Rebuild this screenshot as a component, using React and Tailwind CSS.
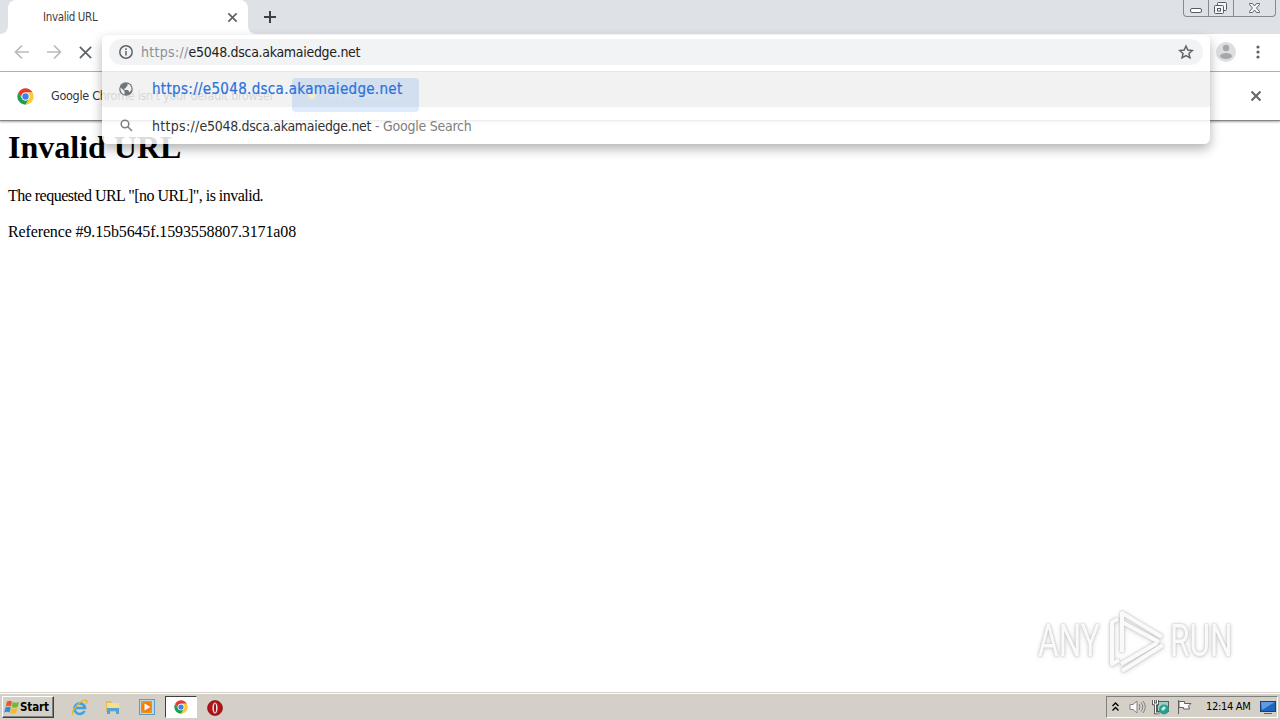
import React from 'react';

function CloseIcon({ className, width = 1.8 }) {
    return (
        <svg className={className} viewBox="0 0 12 12" fill="none" stroke="currentColor" strokeWidth={width}>
            <path d="M1.5 1.5l9 9M10.5 1.5l-9 9" />
        </svg>
    );
}

function ChromeIcon({ className }) {
    return (
        <svg className={className} viewBox="0 0 48 48">
            <circle cx="24" cy="24" r="23" fill="#fff" />
            <path d="M4.1 12.5A23 23 0 0 1 43.9 12.5H24A11.5 11.5 0 0 0 14 29.7z" fill="#e33b2e" />
            <path d="M43.9 12.5A23 23 0 0 1 24 47l10-17.3A11.5 11.5 0 0 0 24 12.5z" fill="#fcc934" />
            <path d="M24 47A23 23 0 0 1 4.1 12.5L14 29.7A11.5 11.5 0 0 0 34 29.7z" fill="#1e9e50" />
            <circle cx="24" cy="24" r="11" fill="#fff" />
            <circle cx="24" cy="24" r="9" fill="#3f7fe8" />
        </svg>
    );
}

function TabStrip() {
    return (
        <div className="flex h-[34px] items-start bg-[#dee1e6]">
            <div className="h-[34px] w-2 bg-white">
                <div className="h-[34px] w-2 rounded-br-lg bg-[#dee1e6]"></div>
            </div>
            <div className="flex h-[34px] w-[240px] items-center rounded-t-lg bg-white pl-[35px] pr-[10px]">
                <span className="flex-1 pt-px text-[11.5px] tracking-[-0.35px] text-[#3c4043]">Invalid URL</span>
                <CloseIcon className="h-[11px] w-[11px] text-[#5f6368]" width={1.9} />
            </div>
            <div className="h-[34px] w-2 bg-white">
                <div className="h-[34px] w-2 rounded-bl-lg bg-[#dee1e6]"></div>
            </div>
            <svg className="ml-[7px] mt-[10px] h-[14px] w-[14px]" viewBox="0 0 14 14" stroke="#3c4043" strokeWidth="2">
                <path d="M7 1v12M1 7h12" />
            </svg>
            <div className="ml-auto mr-1 flex h-[17px] w-[93px] rounded-b-[4px] border border-t-0 border-[#848994] bg-[#dee1e6]">
                <div className="w-[25px] border-r border-[#848994]">
                    <svg className="h-4 w-6" viewBox="0 0 24 16" fill="#fff" stroke="#555b66">
                        <rect x="6.5" y="8.5" width="11" height="4" rx="1.5" />
                    </svg>
                </div>
                <div className="w-[25px] border-r border-[#848994]">
                    <svg className="h-4 w-6" viewBox="0 0 24 16" fill="#f5f6f8" stroke="#555b66">
                        <rect x="8.5" y="2.5" width="9" height="8" rx="1" />
                        <rect x="5.5" y="5.5" width="9" height="8" rx="1" />
                        <rect x="8.5" y="8.5" width="3" height="2.5" />
                    </svg>
                </div>
                <svg className="h-4 w-[41px]" viewBox="0 0 41 16" fill="#f5f6f8" stroke="#555b66" strokeWidth="0.9">
                    <path d="M15.5 3.5h3l2 2.500 2-2.500h3v1L22.5 8l3 3.500v1h-3l-2-2.500-2 2.500h-3v-1l3-3.500-3-3.500z" />
                </svg>
            </div>
        </div>
    );
}

function Toolbar() {
    return (
        <div className="flex h-[38px] items-center border-b border-[#b2b4b6] bg-white pb-px pl-[14px]">
            <svg className="mr-4 h-4 w-4" viewBox="0 0 16 16" fill="none" stroke="#b8babd" strokeWidth="1.700">
                <path d="M15 8H2M8 1.500L1.500 8 8 14.500" />
            </svg>
            <svg className="mr-4 h-4 w-4" viewBox="0 0 16 16" fill="none" stroke="#b8babd" strokeWidth="1.700">
                <path d="M1 8h13M8 1.500L14.500 8 8 14.500" />
            </svg>
            <CloseIcon className="h-[15px] w-[15px] text-[#5f6368]" width={1.4} />
            <svg className="ml-auto mr-5 h-5 w-5" viewBox="0 0 20 20">
                <circle cx="10" cy="10" r="10" fill="#dddedf" />
                <circle cx="10" cy="6" r="3.200" fill="#a5a7aa" />
                <ellipse cx="10" cy="14" rx="6" ry="3" fill="#a5a7aa" />
            </svg>
            <svg className="mr-5 h-4 w-[4px]" viewBox="0 0 4 16" fill="#5f6368">
                <circle cx="2" cy="3" r="1.600" />
                <circle cx="2" cy="8" r="1.600" />
                <circle cx="2" cy="13" r="1.600" />
            </svg>
        </div>
    );
}

function DefaultBrowserBar() {
    return (
        <div className="flex h-[49px] items-center border-b border-[#858585] bg-white pl-[17px] pr-[18px] shadow-[0_1px_2px_rgba(0,0,0,0.35)]">
            <ChromeIcon className="h-[17px] w-[17px]" />
            <span className="ml-[17px] w-[241px] whitespace-nowrap text-[12.5px] tracking-[-0.3px] text-[#333]">
                Google Chrome isn't your default browser
            </span>
            <div className="mt-[-2px] flex h-[34px] w-[127px] items-center gap-2 rounded-[4px] bg-[#1a73e8] pl-4 text-[12px] text-[#5d9bee]">
                <span className="h-2 w-2 rounded-full bg-[#fcc934]"></span>
                Set as default
            </div>
            <CloseIcon className="ml-auto h-[12px] w-[12px] text-[#5f6368]" width={1.9} />
        </div>
    );
}

function Omnibox() {
    return (
        <div className="absolute left-[102px] top-[35px] h-[109px] w-[1108px] rounded-[6px] bg-white/86 shadow-[0_5px_12px_rgba(0,0,0,0.3)]">
            <div className="h-9 px-[7px] pt-[4px]">
                <div className="flex h-[26px] items-center rounded-full bg-[#f1f3f4] pl-[10px] pr-[9px]">
                    <svg className="h-[14px] w-[14px]" viewBox="0 0 14 14" fill="none" stroke="#5f6368" strokeWidth="1.500">
                        <circle cx="7" cy="7" r="6.200" />
                        <path d="M7 6v4.500M7 3.300v1.600" />
                    </svg>
                    <span className="ml-2 text-[14px] tracking-[-0.3px] text-[#222]">
                        <span className="tracking-[0.3px] text-[#8b9095]">https://</span>e5048.dsca.akamaiedge.net
                    </span>
                    <svg className="ml-auto h-4 w-4" viewBox="0 0 24 24" fill="none" stroke="#5f6368" strokeWidth="2.200">
                        <path d="M12 3l2.700 6.100 6.800.6-5.100 4.500 1.500 6.600L12 17.300l-5.900 3.500 1.500-6.600L2.500 9.700l6.800-.6z" />
                    </svg>
                </div>
            </div>
            <div className="flex h-9 items-center bg-black/5 pl-[17px]">
                <svg className="h-[14px] w-[14px]" viewBox="0 0 14 14">
                    <circle cx="7" cy="7" r="6.800" fill="#70757a" />
                    <path d="M1.500 5.500l4 3.500v3.500C3 12 1.300 9.500 1.500 5.500zM8.500 1.700c3 .6 4.300 3.200 4 6l-2 2.500L9 8H5.500V6.300H7V5l1.500-1z" fill="#f1f1f1" />
                </svg>
                <span className="ml-[19px] text-[15px] tracking-[0.31px] text-[#2b72dc] [-webkit-text-stroke:0.2px_#2b72dc]">https://e5048.dsca.akamaiedge.net</span>
            </div>
            <div className="flex h-[37px] items-center pl-[18px] pt-px">
                <svg className="-mt-px h-[13px] w-[13px]" viewBox="0 0 13 13" fill="none" stroke="#7b7f83" strokeWidth="1.500">
                    <circle cx="5" cy="5" r="3.800" />
                    <path d="M7.800 7.800L12 12" />
                </svg>
                <span className="ml-[19px] text-[14px] tracking-[-0.3px] text-[#333]">
                    <span className="tracking-[0.3px]">https://</span>e5048.dsca.akamaiedge.net<span className="tracking-[-0.25px] text-[#808080]"> - Google Search</span>
                </span>
            </div>
        </div>
    );
}

function Watermark() {
    return (
        <div className="absolute left-[1038px] top-[609px] flex h-[64px] w-[196px] items-center justify-between font-['Roboto',sans-serif] text-[44px] text-[#fafafa] [filter:drop-shadow(0_0_1px_#bbb)_drop-shadow(0_1px_2px_#ddd)]">
            <span className="w-[66px] origin-left scale-x-[0.72]">ANY</span>
            <svg className="h-[62px] w-[58px] shrink-0" viewBox="0 0 58 62" fill="none" stroke="#fafafa" strokeWidth="4" strokeLinejoin="round">
                <path d="M14 42V3l40 24M14 12l37 20M13 54l36-21M14 61l41-26M10 9L4 12v42l7-4" />
            </svg>
            <span className="w-[64px] origin-left scale-x-[0.72]">RUN</span>
        </div>
    );
}

function WindowsFlag() {
    return (
        <svg className="h-4 w-4" viewBox="0 0 16 16">
            <path d="M3 2.500Q6 1 8 2.500L7 7.500Q4.500 6 1.800 7.500z" fill="#e85a20" />
            <path d="M8.800 3Q11.500 4.500 15 3l-1.300 5Q10.500 9.300 7.800 8z" fill="#74b53a" />
            <path d="M1.500 8.500Q4.500 7 6.800 8.500L5.600 13.500Q3 12 .2 13.500z" fill="#3689d6" />
            <path d="M7.500 9Q10.500 10.500 13.500 9l-1.300 5Q9 15.500 6.300 14z" fill="#f5bd20" />
        </svg>
    );
}

function Taskbar() {
    return (
        <div className="flex h-7 items-start border-t border-[#d4d0c8] bg-[#d4d0c8] pt-[3px] shadow-[inset_0_1px_0_#fff] font-['DejaVu_Sans_Condensed','DejaVu_Sans',sans-serif]">
            <div className="ml-[2px] flex h-[22px] w-[52px] items-center border border-b-[#404040] border-l-white border-r-[#404040] border-t-white pl-[1px] shadow-[inset_-1px_-1px_0_#808080]">
                <WindowsFlag />
                <span className="pt-px text-[11.5px] font-bold tracking-[-0.1px] text-black">Start</span>
            </div>
            <svg className="ml-[17px] mt-[3px] h-[17px] w-[17px]" viewBox="0 0 17 17" fill="none">
                <path d="M13.500 12A5.300 5.300 0 1 1 14 9H5" stroke="#3fa3dc" strokeWidth="2.600" />
                <path d="M2 15.500C-1.500 13 11-1 15.500 1.500c1 .8.300 2-.5 3" stroke="#e8b42c" strokeWidth="1.300" />
            </svg>
            <svg className="ml-[17px] mt-[3px] h-4 w-4" viewBox="0 0 16 16">
                <path d="M1 2h5l1 2h7v9H1z" fill="#e3bd55" />
                <path d="M2 4h12v5H2z" fill="#f7e08d" />
                <path d="M2 9h12v6h-3v-3H5v3H2z" fill="#55a3d3" />
            </svg>
            <svg className="ml-[18px] mt-[3px] h-4 w-4" viewBox="0 0 16 16">
                <rect x="0.500" y="0.500" width="15" height="15" fill="#b9d9ed" stroke="#5a9bc7" />
                <rect x="2" y="2" width="11" height="12" fill="#f29018" />
                <circle cx="7.500" cy="8" r="5" fill="#f67a07" />
                <path d="M5.500 4.500v7L11.500 8z" fill="#fff" />
            </svg>
            <div className="ml-[10px] flex h-[22px] w-8 items-center justify-center border border-b-white border-l-[#404040] border-r-white border-t-[#404040] bg-white">
                <ChromeIcon className="h-[14px] w-[14px]" />
            </div>
            <svg className="ml-[10px] mt-[4px] h-4 w-4" viewBox="0 0 16 16">
                <circle cx="8" cy="8" r="7.500" fill="#b51218" stroke="#6e0a0d" strokeWidth="0.600" />
                <ellipse cx="8" cy="8" rx="2.600" ry="5.500" fill="#f2dede" />
                <ellipse cx="8" cy="8" rx="1" ry="4.500" fill="#8d1014" />
            </svg>
            <div className="ml-auto mr-[2px] flex h-[22px] w-[172px] items-center border border-b-white border-l-[#808080] border-r-white border-t-[#808080] pl-[5px]">
                <svg className="h-[10px] w-[7px]" viewBox="0 0 7 10" fill="none" stroke="#000" strokeWidth="1.400">
                    <path d="M.5 4l3-3 3 3M.5 8.500l3-3 3 3" />
                </svg>
                <svg className="ml-[10px] h-4 w-[17px]" viewBox="0 0 17 16" fill="none" stroke="#828282">
                    <path d="M1 5.500h3L8 2v12l-4-3.500H1z" fill="#fafafa" />
                    <path d="M10 5q2 3 0 6M12 3.500q3.500 4.500 0 9M14 2q4.500 6 0 12" />
                </svg>
                <svg className="ml-[6px] h-4 w-[18px]" viewBox="0 0 18 16">
                    <rect x="5.500" y="2.500" width="11" height="10" fill="#9bcfc9" stroke="#56605f" />
                    <circle cx="12" cy="10.500" r="5" fill="#279e89" />
                    <path d="M9 10l3-3 2 2-3 3z" fill="#caeee6" />
                    <path d="M1.500 1v4h4V1M3.500 5v9h4" fill="none" stroke="#444" strokeWidth="2.600" />
                    <path d="M1.500 1v4h4V1M3.500 5v9h4" fill="none" stroke="#fff" />
                </svg>
                <svg className="ml-[6px] h-4 w-4" viewBox="0 0 16 16" fill="#fafafa" stroke="#606060">
                    <path d="M2.500 1v14" />
                    <path d="M3 2.500h5.500v2H15L12.500 7l1 3H7.500V8.500H3z" />
                </svg>
                <span className="ml-[14px] w-[48px] whitespace-nowrap pt-px text-[11px] tracking-[-0.3px] text-black">12:14 AM</span>
                <svg className="ml-[6px] h-[15px] w-4" viewBox="0 0 16 15">
                    <rect x="0.500" y="1.500" width="15" height="10" fill="#2265bf" stroke="#153e80" />
                    <path d="M1 2h14L2 10z" fill="#5d9be3" />
                    <path d="M4 13.500h8" stroke="#59636d" />
                </svg>
            </div>
        </div>
    );
}

function App() {
    return (
        <div className="relative flex h-[720px] w-[1280px] flex-col overflow-hidden bg-white font-['DejaVu_Sans_Condensed','DejaVu_Sans',sans-serif]">
            <TabStrip />
            <Toolbar />
            <DefaultBrowserBar />
            <main className="flex-1 pl-2 pt-[8px] font-['Liberation_Serif',serif] text-black">
                <h1 className="text-[32px] font-bold leading-[36px]">Invalid URL</h1>
                <p className="mt-[22px] text-[16px] leading-[18px] tracking-[-0.52px]">The requested URL "[no URL]", is invalid.</p>
                <p className="mt-[18px] text-[16px] leading-[18px] tracking-[-0.13px]">Reference #9.15b5645f.1593558807.3171a08</p>
            </main>
            <Taskbar />
            <Omnibox />
            <Watermark />
        </div>
    );
}

export default App;
